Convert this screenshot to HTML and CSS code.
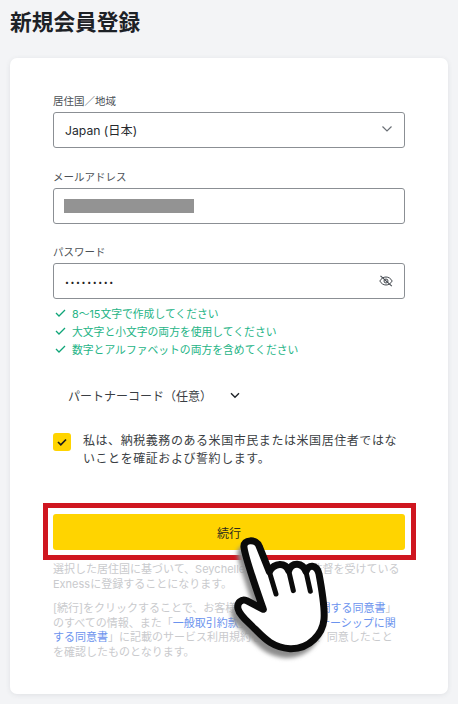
FILE: index.html
```html
<!DOCTYPE html>
<html lang="ja">
<head>
<meta charset="utf-8">
<title>新規会員登録</title>
<link rel="stylesheet" href="styles.css">
</head>
<body>
<main class="page">
  <h1 class="title">新規会員登録</h1>
  <section class="card">
    <div class="field">
      <label class="label">居住国／地域</label>
      <div class="box">
        <span class="value">Japan (日本)</span>
        <svg class="chev" width="12" height="8" viewBox="0 0 12 8"><path d="M1.5 1.5 6 6l4.5-4.5" fill="none" stroke="#6b7076" stroke-width="1.2"/></svg>
      </div>
    </div>
    <div class="field field-second">
      <label class="label">メールアドレス</label>
      <div class="box"><span class="redact"></span></div>
    </div>
    <div class="field field-last">
      <label class="label">パスワード</label>
      <div class="box">
        <span class="dots">•••••••••</span>
        <svg class="eye" width="14" height="12" viewBox="0 0 14 12"><path d="M.8 6C2.3 3.4 4.5 2 7 2s4.700 1.400 6.200 4C11.700 8.600 9.500 10 7 10S2.300 8.600.8 6Z" fill="none" stroke="#43484e" stroke-width="1"/><circle cx="7" cy="6" r="2" fill="none" stroke="#43484e" stroke-width="1"/><path d="M1.500.8 12.800 11.200" stroke="#43484e" stroke-width="1.100"/></svg>
      </div>
    </div>
    <ul class="hints">
      <li class="hint"><svg class="tick" width="11" height="8" viewBox="0 0 11 8"><path d="M1 4l3 3 6-6" fill="none" stroke="#0fa578" stroke-width="1.300"/></svg>8～15文字で作成してください</li>
      <li class="hint"><svg class="tick" width="11" height="8" viewBox="0 0 11 8"><path d="M1 4l3 3 6-6" fill="none" stroke="#0fa578" stroke-width="1.300"/></svg>大文字と小文字の両方を使用してください</li>
      <li class="hint"><svg class="tick" width="11" height="8" viewBox="0 0 11 8"><path d="M1 4l3 3 6-6" fill="none" stroke="#0fa578" stroke-width="1.300"/></svg>数字とアルファベットの両方を含めてください</li>
    </ul>
    <div class="partner">
      <span>パートナーコード（任意）</span>
      <svg width="10" height="7" viewBox="0 0 10 7"><path d="M1 1.200 5 5.200l4-4" fill="none" stroke="#1f2429" stroke-width="1.400"/></svg>
    </div>
    <div class="consent">
      <span class="check"><svg width="10" height="8" viewBox="0 0 10 8"><path d="M1 4l2.800 2.800L9 1.500" fill="none" stroke="#1a1c1e" stroke-width="1.700"/></svg></span>
      <p class="consent-text">私は、納税義務のある米国市民または米国居住者ではないことを確証および誓約します。</p>
    </div>
    <button class="submit" type="button">続行</button>
    <p class="note note-first">選択した居住国に基づいて、Seychelles FSA 当局の監督を受けている<br>Exnessに登録することになります。</p>
    <p class="note">[続行]をクリックすることで、お客様は「<a class="link">顧客 契約 に関する同意書</a>」<br>のすべての情報、また「<a class="link">一般取引約款</a>」及び 「<a class="link">パートナーシップに関<br>する同意書</a>」に記載のサービス利用規約をすべて読み、同意したこと<br>を確認したものとなります。</p>
  </section>
</main>
<div class="redbox"></div>
<svg class="hand" width="130" height="150" viewBox="0 0 390 450">
  <defs><filter id="soft" x="-20%" y="-20%" width="140%" height="140%"><feGaussianBlur stdDeviation="7"/></filter></defs>
  <path d="M132 82C136 115 175 225 190 268L140 242C125 235 110 248 114 266C118 285 140 302 165 327C190 352 215 382 270 386C330 388 368 340 372 298C375 265 365 205 357 162C350 132 324 132 318 155C308 127 276 125 266 152C256 127 224 127 208 155L178 80C170 55 128 58 132 82Z" transform="translate(-12 20)" fill="#8c8c8c" stroke="#8c8c8c" stroke-width="16" filter="url(#soft)"/>
  <path d="M132 82C136 115 175 225 190 268L140 242C125 235 110 248 114 266C118 285 140 302 165 327C190 352 215 382 270 386C330 388 368 340 372 298C375 265 365 205 357 162C350 132 324 132 318 155C308 127 276 125 266 152C256 127 224 127 208 155L178 80C170 55 128 58 132 82Z" fill="#fff" stroke="#0b0b0b" stroke-width="21" stroke-linejoin="round"/>
  <path d="M208 155 228 222M266 152 280 212M318 155 331 214" fill="none" stroke="#0b0b0b" stroke-width="15" stroke-linecap="round"/>
</svg>
</body>
</html>
```

FILE: styles.css
```css
* { box-sizing: border-box; }
html, body { margin: 0; padding: 0; }
body {
  width: 458px;
  height: 704px;
  overflow: hidden;
  position: relative;
  background: #f3f4f6;
  font-family: Inter, "Noto Sans CJK JP", sans-serif;
  color: #1f2429;
}
.page { padding: 0 10px; }
.title {
  margin: 0;
  padding-top: 7px;
  height: 58px;
  font-size: 21.700px;
  line-height: 30px;
  font-weight: 700;
  color: #1d2126;
}
.card {
  height: 636px;
  padding: 34px 43px 0;
  background: #fff;
  border-radius: 7px;
  box-shadow: 0 1px 5px rgba(60, 70, 80, 0.1);
}
.field { margin-bottom: 20px; }
.field-second { margin-bottom: 19px; }
.field-last { margin-bottom: 0; }
.label {
  display: block;
  height: 20px;
  font-size: 10.500px;
  line-height: 20px;
  color: #4b5056;
}
.box {
  height: 36px;
  border: 1px solid #8b8f94;
  border-radius: 3px;
  background: #fff;
  display: flex;
  align-items: center;
  justify-content: space-between;
  padding: 0 16px 0 11px;
}
.value { font-size: 12.200px; color: #26292d; }
.chev { margin-right: -5px; margin-top: -3px; }
.redact { width: 130px; height: 14px; margin-left: -1px; background: #939393; }
.dots { font-size: 7px; letter-spacing: 1.600px; color: #222; margin-top: 2px; }
.eye { margin-top: -1px; margin-right: -5px; }
.hints { list-style: none; margin: 5px 0 0; padding: 0 0 0 2px; }
.hint {
  display: flex;
  align-items: center;
  gap: 6px;
  height: 18px;
  font-size: 10.800px;
  color: #25b486;
}
.tick { flex: none; }
.partner {
  display: flex;
  align-items: center;
  gap: 18px;
  margin-top: 27px;
  padding-left: 15px;
  height: 20px;
  font-size: 12px;
  color: #3a3e43;
}
.consent { display: flex; gap: 12px; margin-top: 27px; }
.check {
  flex: none;
  width: 18px;
  height: 18px;
  margin-top: 1px;
  border-radius: 3px;
  background: #ffd400;
  display: flex;
  align-items: center;
  justify-content: center;
}
.consent-text {
  margin: 0;
  width: 322px;
  font-size: 12px;
  letter-spacing: 0.560px;
  line-height: 18px;
  color: #3a3e43;
}
.submit {
  display: block;
  width: 352px;
  height: 36px;
  margin: 46px 0 0;
  padding: 0;
  border: 0;
  border-radius: 3px;
  background: #ffd400;
  font: inherit;
  font-size: 12px;
  color: #2b2b1e;
}
.note {
  margin: 0 0 10px;
  white-space: nowrap;
  font-size: 11px;
  line-height: 14.500px;
  color: #c9cacd;
}
.note-first { margin-top: 12px; }
.link { color: #6b93ee; }
.redbox {
  position: absolute;
  left: 43px;
  top: 503px;
  width: 373px;
  height: 57px;
  border: 5px solid #cf1620;
}
.hand {
  position: absolute;
  left: 200px;
  top: 520px;
}
```
